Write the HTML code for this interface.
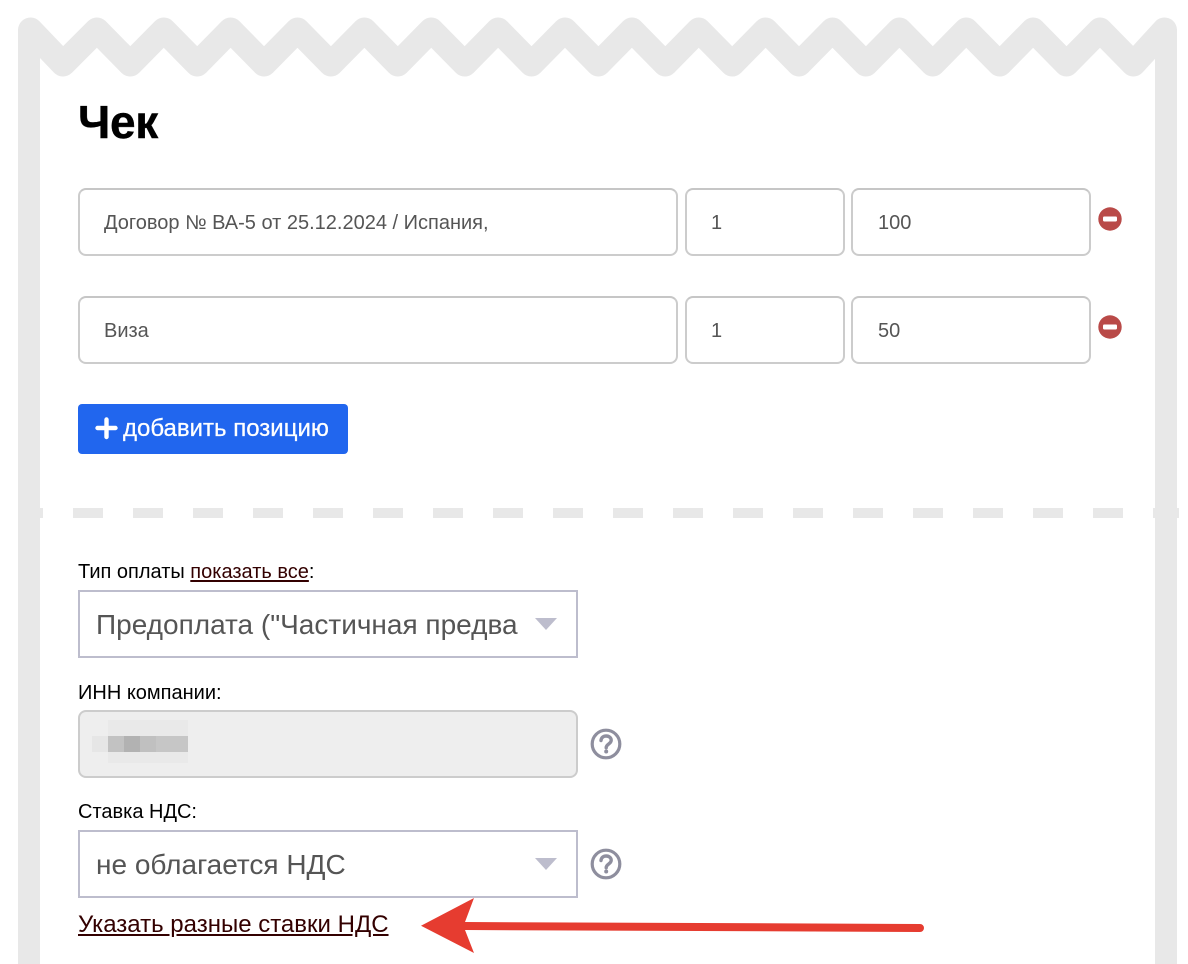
<!DOCTYPE html>
<html lang="ru"><head><meta charset="utf-8"><title>Чек</title>
<style>
html,body{margin:0;padding:0;background:#fff;width:1188px;height:964px;overflow:hidden}
body{position:relative;font-family:"Liberation Sans",Arial,sans-serif;color:#000}
.a{position:absolute;box-sizing:border-box}
.t{position:absolute;white-space:nowrap;line-height:1}
.inp{border:2px solid #ccc;border-top-color:#c6c6c6;border-radius:8px;background:#fff;height:68px}
.v{font-size:20px;color:#555}
.sel{border:2px solid #bdbdcd;background:#fff;left:78px;width:500px;height:68px}
.sv{font-size:28px;color:#555;left:96px}
.l{font-size:20px;color:#000;left:78px}
a{color:#300;text-decoration:underline;text-underline-offset:2px}
svg{position:absolute;left:0;top:0}
</style></head><body>
<svg width="1188" height="964" viewBox="0 0 1188 964">
<g fill="#e8e8e8">
<rect x="18" y="30" width="22" height="934"/><rect x="1155" y="30" width="22" height="934"/>
<path fill="none" stroke="#e8e8e8" stroke-width="25" stroke-linejoin="round" stroke-linecap="round" d="M30.500 30L63 64L96.900 30L130.300 64L163.800 30L197.200 64L230.600 30L264 64L297.500 30L330.900 64L364.400 30L397.800 64L431.200 30L464.700 64L498.100 30L531.500 64L565 30L598.400 64L631.900 30L665.300 64L698.700 30L732.200 64L765.600 30L799 64L832.500 30L865.900 64L899.400 30L932.800 64L966.200 30L999.700 64L1033.100 30L1066.500 64L1100 30L1133.400 64L1164.500 30"/>
<rect x="18" y="508" width="25" height="10"/><rect x="73" y="508" width="30" height="10"/><rect x="133" y="508" width="30" height="10"/><rect x="193" y="508" width="30" height="10"/><rect x="253" y="508" width="30" height="10"/><rect x="313" y="508" width="30" height="10"/><rect x="373" y="508" width="30" height="10"/><rect x="433" y="508" width="30" height="10"/><rect x="493" y="508" width="30" height="10"/><rect x="553" y="508" width="30" height="10"/><rect x="613" y="508" width="30" height="10"/><rect x="673" y="508" width="30" height="10"/><rect x="733" y="508" width="30" height="10"/><rect x="793" y="508" width="30" height="10"/><rect x="853" y="508" width="30" height="10"/><rect x="913" y="508" width="30" height="10"/><rect x="973" y="508" width="30" height="10"/><rect x="1033" y="508" width="30" height="10"/><rect x="1093" y="508" width="30" height="10"/><rect x="1153" y="508" width="26" height="10"/>
</g>
</svg>
<div class="t" style="left:78px;top:99px;font-size:46px;font-weight:700;letter-spacing:-.3px;-webkit-text-stroke:.4px #000">Чек</div>

<div class="a inp" style="left:78px;top:188px;width:600px"></div>
<div class="a inp" style="left:685px;top:188px;width:160px"></div>
<div class="a inp" style="left:851px;top:188px;width:240px"></div>
<div class="t v" style="left:104px;top:213px">Договор № ВА-5 от 25.12.2024 / Испания,</div>
<div class="t v" style="left:711px;top:213px">1</div>
<div class="t v" style="left:878px;top:213px">100</div>

<div class="a inp" style="left:78px;top:296px;width:600px"></div>
<div class="a inp" style="left:685px;top:296px;width:160px"></div>
<div class="a inp" style="left:851px;top:296px;width:240px"></div>
<div class="t v" style="left:104px;top:321px">Виза</div>
<div class="t v" style="left:711px;top:321px">1</div>
<div class="t v" style="left:878px;top:321px">50</div>

<svg width="1188" height="964" viewBox="0 0 1188 964">
<circle cx="1110" cy="219" r="11.700" fill="#b94a48"/><rect x="1103" y="216.500" width="14" height="5" rx="1.200" fill="#fff"/>
<circle cx="1110" cy="327" r="11.700" fill="#b94a48"/><rect x="1103" y="324.500" width="14" height="5" rx="1.200" fill="#fff"/>
</svg>

<div class="a" style="left:78px;top:404px;width:270px;height:50px;background:#2166ee;border-radius:4px"></div>
<svg width="1188" height="964" viewBox="0 0 1188 964"><path d="M106.500 419.500v17.500M97.500 428h18" stroke="#fff" stroke-width="4.400" stroke-linecap="round" fill="none"/></svg>
<div class="t" style="left:123px;top:417px;font-size:24px;color:#fff;-webkit-text-stroke:.25px #fff">добавить позицию</div>

<div class="t l" style="top:562px">Тип оплаты <a>показать все</a>:</div>
<div class="a sel" style="top:590px"></div>
<div class="t sv" style="top:611px">Предоплата ("Частичная предва</div>

<div class="t l" style="top:683px">ИНН компании:</div>
<div class="a" style="left:78px;top:710px;width:500px;height:68px;background:#eee;border:2px solid #ccc;border-radius:8px"></div>
<svg width="1188" height="964" viewBox="0 0 1188 964" shape-rendering="crispEdges">
<rect x="108" y="720" width="80" height="16" fill="#e9e9e9"/><rect x="108" y="752" width="80" height="11" fill="#e9e9e9"/>
<rect x="92" y="736" width="16" height="16" fill="#e6e6e6"/>
<rect x="108" y="736" width="16" height="16" fill="#c2c2c2"/><rect x="124" y="736" width="16" height="16" fill="#b2b2b2"/><rect x="140" y="736" width="16" height="16" fill="#c0c0c0"/><rect x="156" y="736" width="32" height="16" fill="#c6c6c6"/>
</svg>

<div class="t l" style="top:802px">Ставка НДС:</div>
<div class="a sel" style="top:830px"></div>
<div class="t sv" style="top:851px">не облагается НДС</div>

<svg width="1188" height="964" viewBox="0 0 1188 964">
<path d="M535 618h22l-11 12z" fill="#bdbdcd"/>
<path d="M535 858h22l-11 12z" fill="#bdbdcd"/>
<g fill="none" stroke="#8e8e9e" stroke-width="3.200"><circle cx="606" cy="744" r="13.800"/><circle cx="606" cy="864" r="13.800"/></g>
<g fill="none" stroke="#8e8e9e" stroke-width="3.400" stroke-linecap="round"><path d="M601 740.500c.3-3 2.500-4.500 5.200-4.500 3 0 5 1.900 5 4.300 0 3.700-5 3.700-5 7.400"/><path d="M601 860.500c.3-3 2.500-4.500 5.200-4.500 3 0 5 1.900 5 4.300 0 3.700-5 3.700-5 7.400"/></g>
<circle cx="606.200" cy="751.500" r="2" fill="#8e8e9e"/><circle cx="606.200" cy="871.500" r="2" fill="#8e8e9e"/>
</svg>

<div class="t" style="left:78px;top:913px;font-size:24px"><a>Указать разные ставки НДС</a></div>

<svg width="1188" height="964" viewBox="0 0 1188 964">
<path d="M421 925.700L474 898L465 922L920 924a4 4 0 0 1 0 8L465 930L474 953z" fill="#e63c30"/>
</svg>
</body></html>
